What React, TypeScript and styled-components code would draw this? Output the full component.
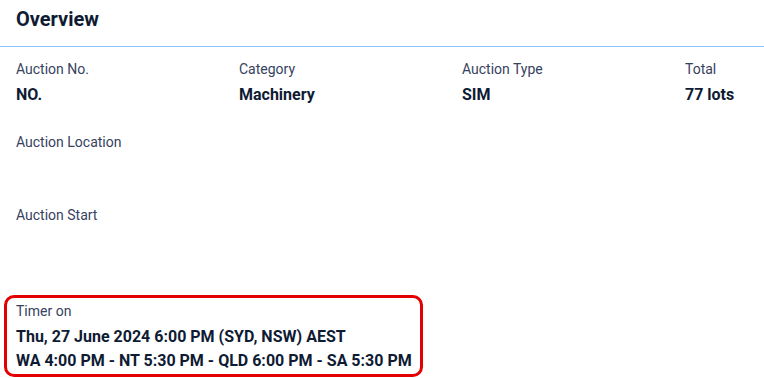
import React from 'react';
import styled, { createGlobalStyle } from 'styled-components';

const GlobalStyle = createGlobalStyle`
  html, body {
    margin: 0;
    padding: 0;
    background: #fff;
    font-family: Roboto, "Liberation Sans", Arial, sans-serif;
    color: #0e1b33;
  }
`;

const Panel = styled.section`
  width: 764px;
  height: 378px;
  overflow: hidden;
  background: #fff;
`;

const Header = styled.header`
  height: 47px;
  box-sizing: border-box;
  padding: 5px 16px 0;
  border-bottom: 1px solid #8cc4ff;
`;

const Title = styled.h2`
  margin: 0;
  font-size: 20px;
  line-height: 28px;
  font-weight: 700;
  color: #0e1b33;
`;

const Body = styled.div`
  padding: 12px 16px 0;
`;

const Grid = styled.div<{ $cols: number }>`
  display: grid;
  grid-template-columns: repeat(${(p) => p.$cols}, 223px);
  row-gap: 25px;
`;

const Field = styled.div``;

const Label = styled.div`
  font-size: 14px;
  line-height: 20px;
  margin-bottom: 4px;
  color: #364260;
`;

const Value = styled.div`
  font-size: 16px;
  line-height: 24px;
  min-height: 24px;
  font-weight: 700;
  color: #0e1b33;
  white-space: nowrap;
`;

const Highlight = styled.div`
  width: fit-content;
  margin: 42px 0 0 -12px;
  padding: 3px 8px 1px 9px;
  border: 3px solid #e30000;
  border-radius: 10px;
`;

const summary = [
  { label: 'Auction No.', value: 'NO.' },
  { label: 'Category', value: 'Machinery' },
  { label: 'Auction Type', value: 'SIM' },
  { label: 'Total', value: '77 lots' },
];

export default function App() {
  return (
    <>
      <GlobalStyle />
      <Panel>
        <Header>
          <Title>Overview</Title>
        </Header>
        <Body>
          <Grid $cols={4}>
            {summary.map((f) => (
              <Field key={f.label}>
                <Label>{f.label}</Label>
                <Value>{f.value}</Value>
              </Field>
            ))}
            <Field style={{ gridColumn: '1 / -1' }}>
              <Label>Auction Location</Label>
              <Value />
            </Field>
            <Field style={{ gridColumn: '1 / -1' }}>
              <Label>Auction Start</Label>
              <Value />
            </Field>
          </Grid>
          <Highlight>
            <Label>Timer on</Label>
            <Value>Thu, 27 June 2024 6:00 PM (SYD, NSW) AEST</Value>
            <Value>WA 4:00 PM - NT 5:30 PM - QLD 6:00 PM - SA 5:30 PM</Value>
          </Highlight>
        </Body>
      </Panel>
    </>
  );
}
